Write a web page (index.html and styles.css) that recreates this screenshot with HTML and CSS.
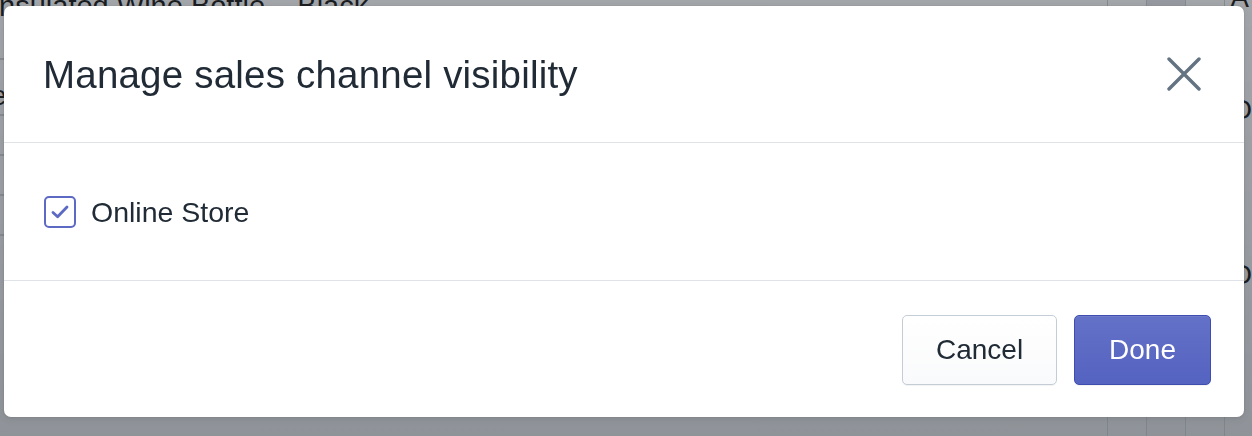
FILE: index.html
```html
<!DOCTYPE html>
<html lang="en">
<head>
<meta charset="utf-8">
<title>Manage sales channel visibility</title>
<link rel="stylesheet" href="styles.css">
</head>
<body>
<div class="page">
  <div class="page-main">
    <div class="page-title">Insulated Wine Bottle – Black</div>
    <div class="page-row"></div>
    <div class="page-row short">e</div>
    <div class="page-row"></div>
    <div class="page-row"></div>
    <div class="page-row"></div>
  </div>
  <div class="page-table">
    <div class="col"></div>
    <div class="col dark"></div>
    <div class="col"></div>
    <div class="col last">
      <div class="cell-text t1">A</div>
      <div class="cell-text t2">O</div>
      <div class="cell-text t3">O</div>
      <div class="cell-text t4">r</div>
    </div>
  </div>
</div>

<div class="backdrop">
  <div class="modal" role="dialog" aria-labelledby="modal-title">
    <div class="modal-header">
      <h2 id="modal-title" class="modal-title">Manage sales channel visibility</h2>
      <button class="close-btn" aria-label="Close">
        <svg width="34" height="34" viewBox="0 0 34 34" aria-hidden="true">
          <path d="M2 2 L32 32 M32 2 L2 32" stroke="#637381" stroke-width="3.4" stroke-linecap="round" fill="none"/>
        </svg>
      </button>
    </div>
    <div class="modal-body">
      <label class="checkbox-row">
        <span class="checkbox">
          <svg width="20" height="16" viewBox="0 0 20 16" aria-hidden="true">
            <path d="M3 8.5 L7.6 12.8 L17 3" stroke="#5c6ac4" stroke-width="2.8" stroke-linecap="round" stroke-linejoin="round" fill="none"/>
          </svg>
        </span>
        <span class="checkbox-label">Online Store</span>
      </label>
    </div>
    <div class="modal-footer">
      <button class="btn btn-secondary">Cancel</button>
      <button class="btn btn-primary">Done</button>
    </div>
  </div>
</div>
</body>
</html>
```

FILE: styles.css
```css
* { box-sizing: border-box; }

html, body {
  margin: 0;
  padding: 0;
  width: 1252px;
  height: 436px;
  overflow: hidden;
}

body {
  font-family: "Liberation Sans", Arial, sans-serif;
  color: #212b36;
  background: #f4f6f8;
}

/* ---------- background page ---------- */
.page {
  display: flex;
  height: 436px;
  background: linear-gradient(180deg, #fafbfc 0%, #eef0f3 60%, #e4e7eb 100%);
}

.page-main {
  flex: 1;
  display: flex;
  flex-direction: column;
  margin-left: -9px;
}

.page-title {
  font-size: 29px;
  line-height: 28px;
  margin-top: -8px;
  color: #111;
  white-space: nowrap;
}

.page-row {
  height: 40px;
  border-bottom: 2px solid #c9ced3;
  font-size: 28px;
  line-height: 56px;
  color: #111;
}

.page-row.short {
  height: 56px;
  line-height: 72px;
  overflow: hidden;
}

.page-table {
  width: 145px;
  display: flex;
}

.col {
  flex: 1;
  border-left: 1px solid #c8cdd2;
}

.col.dark {
  background: #e3e6ea;
}

.col.last {
  flex: 0 0 23px;
  display: flex;
  flex-direction: column;
  padding-left: 5px;
  font-size: 28px;
  color: #111;
}

.cell-text { line-height: 28px; }
.t1 { margin-top: -16px; height: 112px; }
.t2 { height: 165px; }
.t3 { height: 90px; }

/* ---------- backdrop + modal ---------- */
.backdrop {
  position: fixed;
  inset: 0;
  background: linear-gradient(180deg, rgba(40, 46, 54, 0.42) 0%, rgba(40, 46, 54, 0.45) 100%);
  padding: 6px 8px 0 4px;
}

.modal {
  width: 1240px;
  height: 411px;
  background: #ffffff;
  border-radius: 7px;
  display: flex;
  flex-direction: column;
  overflow: hidden;
  box-shadow: 0 0 0 1px rgba(63, 63, 68, 0.05), 0 2px 6px rgba(63, 63, 68, 0.15);
}

.modal-header {
  height: 137px;
  flex: 0 0 137px;
  display: flex;
  align-items: center;
  justify-content: space-between;
  padding: 0 43px 0 39px;
  border-bottom: 1px solid #dfe3e8;
}

.modal-title {
  margin: 0;
  font-size: 38.5px;
  font-weight: 400;
  line-height: 46px;
  color: #212b36;
  letter-spacing: 0.2px;
  padding-top: 2px;
}

.close-btn {
  border: 0;
  background: none;
  padding: 0;
  width: 34px;
  height: 34px;
  display: flex;
  align-items: center;
  justify-content: center;
  cursor: pointer;
}

.modal-body {
  flex: 0 0 138px;
  display: flex;
  align-items: center;
  padding: 0 40px;
  border-bottom: 1px solid #dfe3e8;
}

.checkbox-row {
  display: flex;
  align-items: center;
  gap: 15px;
  cursor: pointer;
}

.checkbox {
  width: 32px;
  height: 32px;
  border: 2px solid #5c6ac4;
  border-radius: 5px;
  display: flex;
  align-items: center;
  justify-content: center;
  background: #fff;
}

.checkbox-label {
  font-size: 28.5px;
  line-height: 32px;
  color: #212b36;
}

.modal-footer {
  flex: 1;
  display: flex;
  align-items: center;
  justify-content: flex-end;
  gap: 17px;
  padding: 2px 33px 0 0;
}

.btn {
  height: 70px;
  padding: 0 33px;
  font-family: "Liberation Sans", Arial, sans-serif;
  font-size: 28px;
  border-radius: 5px;
  cursor: pointer;
}

.btn-secondary {
  width: 155px;
  color: #212b36;
  background: linear-gradient(180deg, #ffffff, #f9fafb);
  border: 1px solid #c4cdd5;
  box-shadow: 0 1px 0 rgba(22, 29, 37, 0.05);
}

.btn-primary {
  width: 137px;
  color: #ffffff;
  background: linear-gradient(180deg, #6371c7, #5563c1);
  border: 1px solid #3f4eae;
  box-shadow: inset 0 1px 0 0 #6f7bcb, 0 1px 0 rgba(22, 29, 37, 0.05);
}
```
